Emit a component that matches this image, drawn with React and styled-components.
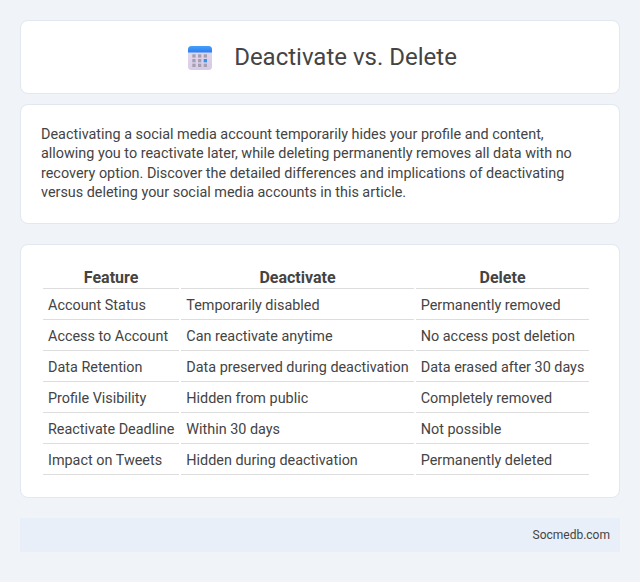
import React from 'react'
import styled, { createGlobalStyle } from 'styled-components'

const GlobalStyle = createGlobalStyle`
  body {
    margin: 0;
    background-color: #f0f4f9;
    font-family: Roboto, "Liberation Sans", sans-serif;
    color: #444;
  }
`

const Page = styled.div`
  display: flex;
  flex-direction: column;
  padding: 20px;
`

const Card = styled.div`
  background: #fff;
  border: 1px solid #e2e8f0;
  border-radius: 8px;
  margin-bottom: ${props => props.$gap}px;
  padding: 20px;
`

const Header = styled.div`
  display: flex;
  align-items: center;
  justify-content: center;
  gap: 22px;
  padding-left: 5px;
`

const Icon = styled.svg`
  margin-top: 2px;
`

const Title = styled.h1`
  margin: 0;
  font-size: 24px;
  font-weight: 400;
  line-height: 32px;
  color: #444;
`

const Intro = styled.p`
  margin: 0;
  font-size: 14.4px;
  line-height: 19.44px;
  color: #444;
`

const Table = styled.table`
  border-collapse: separate;
  border-spacing: 2px;
`

const Th = styled.th`
  font-size: 16px;
  font-weight: 700;
  line-height: 21px;
  padding: 0;
  text-align: center;
  border-bottom: 1px solid #ddd;
  color: #444;
`

const Td = styled.td`
  font-size: 14.4px;
  line-height: 20px;
  padding: 5px 5px 3px;
  border-bottom: 1px solid #ddd;
  color: #444;
  white-space: nowrap;
`

const Footer = styled.div`
  background: #e8eff8;
  height: 34px;
  display: flex;
  align-items: center;
  justify-content: flex-end;
  padding: 0 10px;
  font-size: 12px;
  color: #444;
`

const rows = [
  ['Account Status', 'Temporarily disabled', 'Permanently removed'],
  ['Access to Account', 'Can reactivate anytime', 'No access post deletion'],
  ['Data Retention', 'Data preserved during deactivation', 'Data erased after 30 days'],
  ['Profile Visibility', 'Hidden from public', 'Completely removed'],
  ['Reactivate Deadline', 'Within 30 days', 'Not possible'],
  ['Impact on Tweets', 'Hidden during deactivation', 'Permanently deleted'],
]

function CalendarIcon() {
  return (
    <Icon width="24" height="24" viewBox="0 0 24 24">
      <defs>
        <linearGradient id="calBody" x1="0" y1="0" x2="0.3" y2="1">
          <stop offset="0" stopColor="#e6deef" />
          <stop offset="1" stopColor="#d8cbe8" />
        </linearGradient>
        <linearGradient id="calTop" x1="0" y1="0" x2="0" y2="1">
          <stop offset="0" stopColor="#45a0f8" />
          <stop offset="1" stopColor="#2f7cf2" />
        </linearGradient>
      </defs>
      <rect x="0" y="0" width="24" height="24" rx="3.5" fill="url(#calBody)" />
      <path d="M0 6.5V3.5A3.5 3.5 0 0 1 3.5 0h17A3.5 3.5 0 0 1 24 3.5V6.5z" fill="url(#calTop)" />
      {[0, 1, 2].map(r => [0, 1, 2].map(c => (
        <rect
          key={r + '-' + c}
          x={4.3 + c * 5.7}
          y={8.3 + r * 4.7}
          width="3.3"
          height="3.3"
          fill={r === 1 && c === 2 ? '#2f93f0' : '#a59fb0'}
        />
      )))}
    </Icon>
  )
}

export default function App() {
  return (
    <Page>
      <GlobalStyle />
      <Card $gap={10}>
        <Header>
          <CalendarIcon />
          <Title>Deactivate vs. Delete</Title>
        </Header>
      </Card>
      <Card $gap={20}>
        <Intro>
          Deactivating a social media account temporarily hides your profile and content,
          allowing you to reactivate later, while deleting permanently removes all data with no
          recovery option. Discover the detailed differences and implications of deactivating
          versus deleting your social media accounts in this article.
        </Intro>
      </Card>
      <Card $gap={20}>
        <Table>
          <thead>
            <tr>
              <Th>Feature</Th>
              <Th>Deactivate</Th>
              <Th>Delete</Th>
            </tr>
          </thead>
          <tbody>
            {rows.map(row => (
              <tr key={row[0]}>
                {row.map(cell => <Td key={cell}>{cell}</Td>)}
              </tr>
            ))}
          </tbody>
        </Table>
      </Card>
      <Footer>Socmedb.com</Footer>
    </Page>
  )
}
